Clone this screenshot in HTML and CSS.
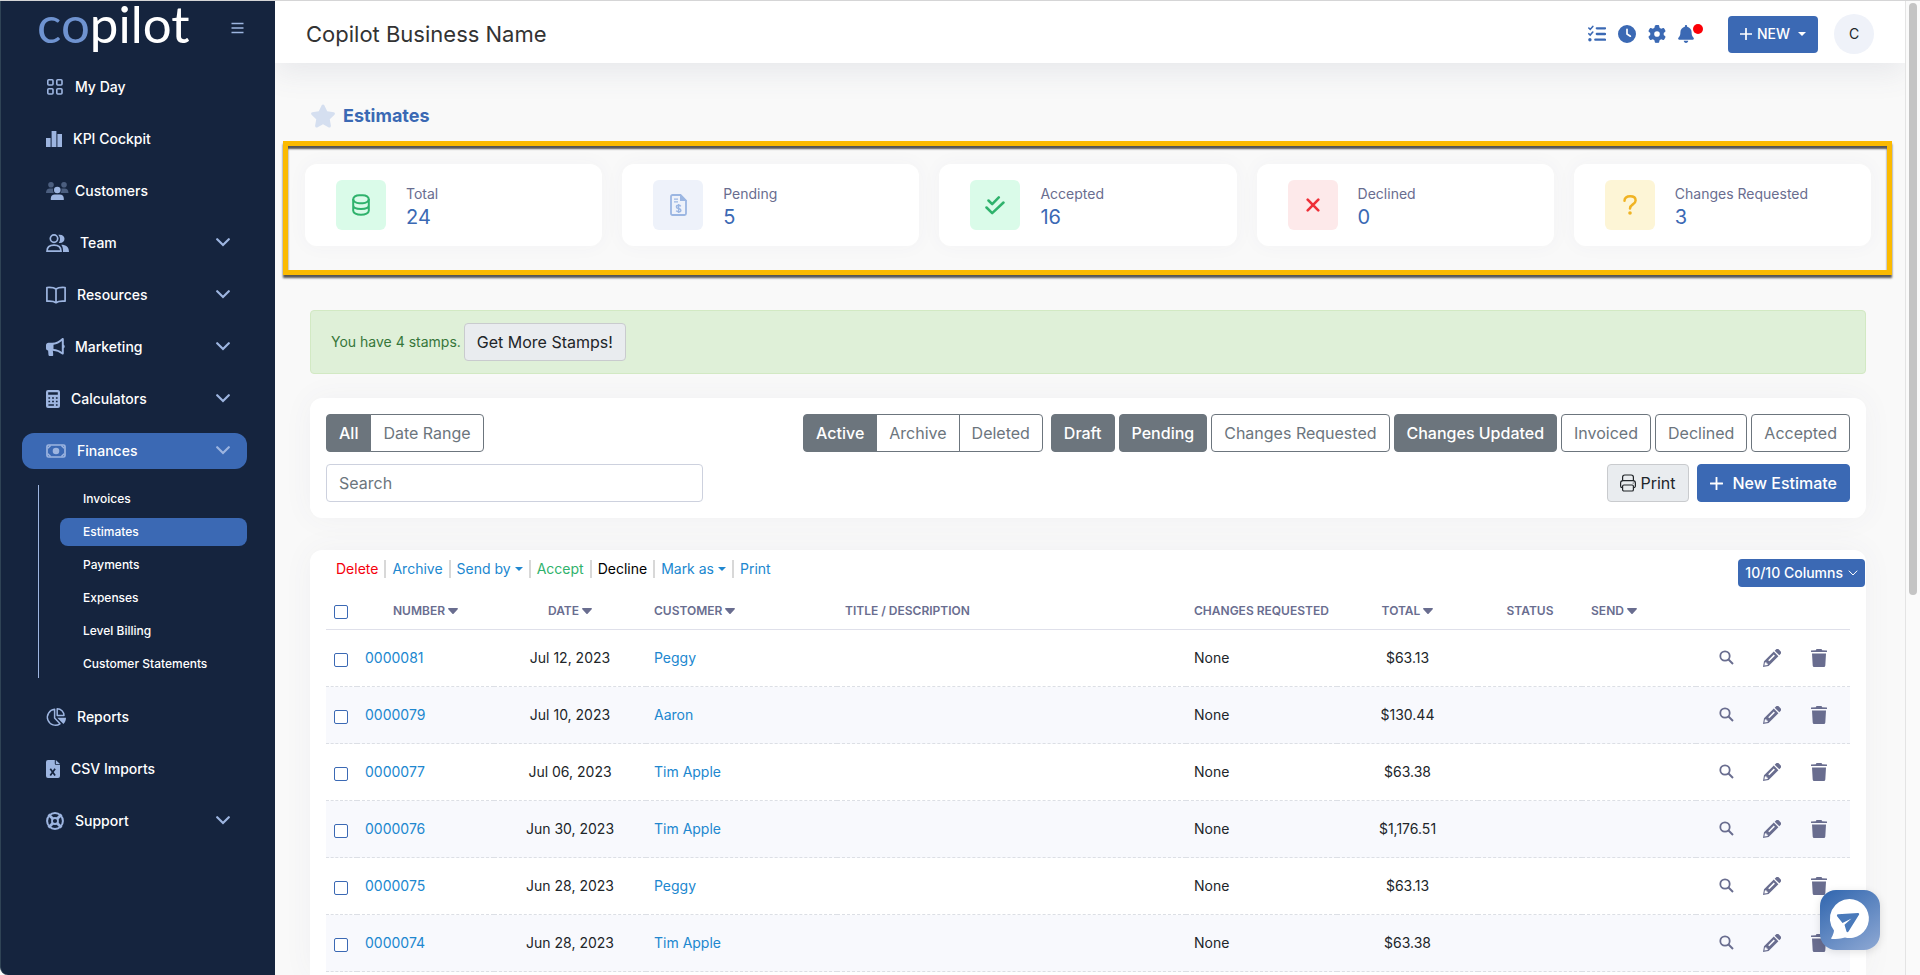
FILE: index.html
```html
<!DOCTYPE html>
<html lang="en">
<head>
<meta charset="utf-8">
<title>Estimates</title>
<link rel="stylesheet" href="styles.css">
</head>
<body>
<svg class="sprite" aria-hidden="true">
  <symbol id="chevron" viewBox="0 0 14 9"><path d="M1.2 1.2 7 7l5.800-5.800" fill="none" stroke="currentColor" stroke-width="2.200" stroke-linecap="round"/></symbol>
  <symbol id="search" viewBox="0 0 15 15"><circle cx="6" cy="6" r="4.700" fill="none" stroke="currentColor" stroke-width="1.800"/><path d="M9.500 9.500 14 14" stroke="currentColor" stroke-width="2"/></symbol>
  <symbol id="pencil" viewBox="0 0 18 18"><path fill="currentColor" fill-rule="evenodd" d="M0 18 1 12.300 10.800 2.600l4.600 4.600L5.600 17zM1.900 13.400l-.5 3.200 3.200-.5.300-1.300-1.300-.2-.2-1.400zM5.200 11.200l1.100 1.100 5.600-5.600-1.100-1.100z"/><path fill="currentColor" d="m11.700 1.700 1-1a2.400 2.400 0 0 1 3.400 0l1.200 1.200a2.400 2.400 0 0 1 0 3.400l-1 1z"/></symbol>
  <symbol id="trash" viewBox="0 0 16 18"><path fill="currentColor" d="M0 1.500 4.800 1.200 5.500 0h5l.700 1.200 4.800.3V3H0zM1 4.400h14l-.7 12a1.600 1.600 0 0 1-1.600 1.600H3.300a1.600 1.600 0 0 1-1.600-1.600z"/></symbol>
  <symbol id="sort" viewBox="0 0 10 6"><path fill="currentColor" d="M.8 0h8.400c.7 0 1 .8.500 1.300L5.600 5.700a.8.800 0 0 1-1.200 0L.3 1.300C-.2.800.1 0 .8 0z"/></symbol>
  <symbol id="caret" viewBox="0 0 8 4"><path fill="currentColor" d="M0 0h8L4 4z"/></symbol>
  <symbol id="plus" viewBox="0 0 12 12"><path d="M6 .5v11M.5 6h11" stroke="currentColor" stroke-width="1.700" stroke-linecap="round"/></symbol>
</svg>
<div class="app">
  <aside class="sidebar">
    <div class="brand">
      <a class="logo" href="#"><span class="logo-co">co</span>pilot</a>
      <button class="menu-toggle" type="button" aria-label="Toggle menu"><svg width="13" height="12" viewBox="0 0 13 12"><path d="M.5 1.500h12M.5 6h12M.5 10.500h12" stroke="currentColor" stroke-width="1.600"/></svg></button>
    </div>
    <nav class="nav">
      <a class="nav-item" href="#"><svg width="18" height="18" viewBox="0 0 18 18"><g fill="none" stroke="currentColor" stroke-width="1.600"><rect x="1.800" y="1.800" width="5.200" height="5.200" rx="1"/><rect x="10.800" y="1.800" width="5.200" height="5.200" rx="1"/><rect x="1.800" y="10.800" width="5.200" height="5.200" rx="1"/><rect x="10.800" y="10.800" width="5.200" height="5.200" rx="1"/></g></svg>My Day</a>
      <a class="nav-item" href="#"><svg width="16" height="18" viewBox="0 0 16 18"><path fill="currentColor" d="M0 8h4.600v9H0zM5.600 1h4.800v16H5.600zM11.400 4H16v13h-4.600z"/></svg>KPI Cockpit</a>
      <a class="nav-item" href="#"><svg width="18" height="18" viewBox="0 0 18 18"><g fill="currentColor"><g opacity=".4"><circle cx="5" cy="2.800" r="2.800"/><circle cx="18" cy="2.800" r="2.800"/><path d="M0 11c0-3 1.600-4.400 4-4.400h3.200C6.700 8.200 7 9.800 8 11zM22.500 11c0-3-1.600-4.400-4-4.400h-3.200c.5 1.600.2 3.200-.8 4.400z"/></g><circle cx="11.300" cy="8" r="3.300"/><path d="M4.800 18v-1.500c0-2.600 1.600-4 4-4h5c2.400 0 4 1.400 4 4V18z"/></g></svg>Customers</a>
      <a class="nav-item" href="#"><svg width="23" height="18" viewBox="0 0 23 18"><g fill="none" stroke="currentColor" stroke-width="1.700"><circle cx="8" cy="4.600" r="3.700"/><path d="M1 17.200c0-4 2.500-6 7-6s7 2 7 6z"/></g><path fill="currentColor" d="M12.300.8c4-.6 6.200 1.300 6.200 4s-2.200 4.700-5.700 4.200c1.800-2.700 1.700-5.600-.5-8.200zM15.200 10.700c5 0 7.800 2.400 7.800 7.300h-6c.2-3-.2-5.200-1.800-7.300z"/></svg>Team<svg class="chev" width="14" height="9"><use href="#chevron"/></svg></a>
      <a class="nav-item" href="#"><svg width="20" height="18" viewBox="0 0 20 18"><path d="M10 3C8 1.500 4.500 1.200.9 1.500v13.700c3.600-.3 7.100 0 9.100 1.500 2-1.500 5.500-1.800 9.100-1.500V1.500C15.500 1.200 12 1.500 10 3zv13.500" fill="none" stroke="currentColor" stroke-width="1.700" stroke-linejoin="round"/></svg>Resources<svg class="chev" width="14" height="9"><use href="#chevron"/></svg></a>
      <a class="nav-item" href="#"><svg width="18" height="18" viewBox="0 0 18 18"><path fill="currentColor" fill-rule="evenodd" d="M16 .3c.9-.5 1.800 0 1.800 1v5.500a2 2 0 0 1 0 3.400v5c0 1.200-1 1.600-1.900 1-2.700-2-5.400-3.200-9.100-3.500.3 1.500.4 3 .4 4.300 0 .6-.4 1-1 1H3.500c-.5 0-.9-.4-1-1l-.4-4.400C.8 12.400 0 11.500 0 10.200V7.300C0 5.800 1 4.800 2.500 4.800h3.600C10 4.800 13.400 3 16 .3zM15.800 3c-2.300 2-5 3.300-8.300 3.700v4.200c3.200.3 6 1.300 8.300 3z"/></svg>Marketing<svg class="chev" width="14" height="9"><use href="#chevron"/></svg></a>
      <a class="nav-item" href="#"><svg width="14" height="18" viewBox="0 0 14 18"><path fill="currentColor" fill-rule="evenodd" d="M2 0h10a2 2 0 0 1 2 2v14a2 2 0 0 1-2 2H2a2 2 0 0 1-2-2V2a2 2 0 0 1 2-2zM2.200 2.200v2.600h9.600V2.200zM2.400 7.200v1.500h1.700V7.200zm3.700 0v1.500h1.800V7.200zm3.800 0v1.500h1.700V7.200zM2.400 10.700v1.500h1.700v-1.500zm3.700 0v1.500h1.800v-1.500zm3.800 0v1.500h1.700v-1.500zM2.400 14.200v1.500h5.500v-1.500zm7.500 0v1.500h1.700v-1.500z"/></svg>Calculators<svg class="chev" width="14" height="9"><use href="#chevron"/></svg></a>
      <a class="nav-item active" href="#"><svg width="20" height="18" viewBox="0 0 20 18"><rect x="1" y="3" width="18" height="12" rx="1.500" fill="none" stroke="currentColor" stroke-width="1.700"/><circle cx="10" cy="9" r="3.300" fill="currentColor"/><path d="M1.800 6.200 4.600 3.500M18.200 6.200l-2.800-2.700M1.800 11.800l2.800 2.700M18.200 11.800l-2.800 2.700" stroke="currentColor" stroke-width="1.500"/></svg>Finances<svg class="chev" width="14" height="9"><use href="#chevron"/></svg></a>
      <div class="subnav">
        <a class="sub-item" href="#">Invoices</a>
        <a class="sub-item active" href="#">Estimates</a>
        <a class="sub-item" href="#">Payments</a>
        <a class="sub-item" href="#">Expenses</a>
        <a class="sub-item" href="#">Level Billing</a>
        <a class="sub-item" href="#">Customer Statements</a>
      </div>
      <a class="nav-item" href="#"><svg width="20" height="18" viewBox="0 0 20 18"><g fill="none" stroke="currentColor" stroke-width="1.500" stroke-linejoin="round"><path d="M8.600 1.300A8 8 0 1 0 14 15.800L8.600 10z"/><path d="M11.200.8v6.800h6.800A6.800 6.800 0 0 0 11.200.8z"/></g><path fill="currentColor" d="M11.300 9.800H20c0 2.600-1 4.800-2.600 6.200z"/></svg>Reports</a>
      <a class="nav-item" href="#"><svg width="14" height="18" viewBox="0 0 14 18"><path fill="currentColor" d="M2 0h6.800v3.500c0 .8.500 1.300 1.200 1.300h4V16a2 2 0 0 1-2 2H2a2 2 0 0 1-2-2V2a2 2 0 0 1 2-2zM9.800 0 14 4h-4.200z"/><path d="m4.300 8.800 4.800 6.700M9.100 8.800l-4.800 6.700" stroke="#15243e" stroke-width="1.700"/></svg>CSV Imports</a>
      <a class="nav-item" href="#"><svg width="18" height="18" viewBox="0 0 18 18"><g fill="none" stroke="currentColor"><circle cx="9" cy="9" r="7.900" stroke-width="2"/><circle cx="9" cy="9" r="3" stroke-width="1.800"/><path d="m2.500 2.500 4.300 4.300M15.500 2.500l-4.300 4.300M2.500 15.500l4.300-4.300M15.500 15.500l-4.300-4.300" stroke-width="2.800"/></g></svg>Support<svg class="chev" width="14" height="9"><use href="#chevron"/></svg></a>
    </nav>
  </aside>

  <div class="page">
    <header class="topbar">
      <div class="business">Copilot Business Name</div>
      <div class="tools">
        <button class="tool" type="button" aria-label="Tasks"><svg width="18" height="18" viewBox="0 0 18 18"><path d="M8.800 3.300h8.200M8.800 9h8.200M7.300 14.700H17" stroke="currentColor" stroke-width="2.300" stroke-linecap="round"/><path d="m.8 3 1.400 1.400 2.600-3M.8 8.700l1.400 1.400 2.600-3" fill="none" stroke="currentColor" stroke-width="1.600" stroke-linecap="round"/><circle cx="1.900" cy="14.700" r="1.700" fill="currentColor"/></svg></button>
        <button class="tool" type="button" aria-label="Clock"><svg width="18" height="18" viewBox="0 0 512 512"><path fill="currentColor" fill-rule="evenodd" d="M256 0a256 256 0 1 1 0 512A256 256 0 1 1 256 0zM232 120V256c0 8 4 15.500 10.700 20l96 64c11 7.400 25.900 4.400 33.300-6.700s4.400-25.900-6.700-33.300L280 243.200V120c0-13.300-10.700-24-24-24s-24 10.700-24 24z"/></svg></button>
        <button class="tool" type="button" aria-label="Settings"><svg width="18" height="18" viewBox="0 0 512 512"><path fill="currentColor" fill-rule="evenodd" d="M495.900 166.600c3.200 8.700 .5 18.400-6.400 24.600l-43.300 39.400c1.100 8.300 1.700 16.800 1.700 25.400s-.6 17.100-1.700 25.400l43.300 39.400c6.900 6.200 9.600 15.900 6.400 24.600c-4.400 11.900-9.700 23.300-15.800 34.300l-4.700 8.100c-6.600 11-14 21.400-22.100 31.200c-5.900 7.200-15.700 9.600-24.500 6.800l-55.700-17.700c-13.400 10.300-28.200 18.900-44 25.400l-12.500 57.100c-2 9.100-9 16.300-18.200 17.800c-13.800 2.300-28 3.500-42.500 3.500s-28.700-1.200-42.500-3.500c-9.200-1.500-16.200-8.700-18.200-17.800l-12.500-57.100c-15.800-6.500-30.600-15.100-44-25.400L83.100 425.900c-8.800 2.800-18.600 .3-24.500-6.800c-8.100-9.800-15.500-20.200-22.100-31.200l-4.700-8.100c-6.100-11-11.400-22.400-15.800-34.300c-3.200-8.700-.5-18.400 6.400-24.600l43.300-39.400C64.600 273.100 64 264.600 64 256s.6-17.100 1.700-25.400L22.400 191.200c-6.900-6.200-9.600-15.900-6.400-24.600c4.400-11.900 9.700-23.300 15.800-34.300l4.700-8.100c6.600-11 14-21.400 22.100-31.200c5.900-7.200 15.700-9.600 24.500-6.800l55.700 17.700c13.400-10.300 28.200-18.900 44-25.400l12.500-57.100c2-9.100 9-16.300 18.200-17.800C227.300 1.200 241.500 0 256 0s28.700 1.200 42.500 3.500c9.200 1.500 16.200 8.700 18.200 17.800l12.500 57.100c15.800 6.500 30.600 15.100 44 25.400l55.700-17.700c8.800-2.800 18.600-.3 24.500 6.800c8.100 9.800 15.500 20.200 22.100 31.200l4.700 8.100c6.100 11 11.400 22.400 15.800 34.300zM256 336a80 80 0 1 0 0-160 80 80 0 1 0 0 160z"/></svg></button>
        <button class="tool bell" type="button" aria-label="Notifications"><svg width="16" height="18" viewBox="0 0 448 512"><path fill="currentColor" d="M224 0c-17.700 0-32 14.300-32 32V51.200C119 66 64 130.600 64 208v18.800c0 47-17.300 92.400-48.500 127.600l-7.400 8.300c-8.400 9.400-10.400 22.900-5.300 34.400S19.400 416 32 416H416c12.600 0 24-7.400 29.200-18.900s3.100-25-5.300-34.400l-7.400-8.300C401.300 319.200 384 273.900 384 226.800V208c0-77.400-55-142-128-156.800V32c0-17.700-14.300-32-32-32zm45.300 493.300c12-12 18.700-28.300 18.700-45.300H224 160c0 17 6.700 33.300 18.700 45.300s28.300 18.700 45.300 18.700s33.300-6.700 45.300-18.700z"/></svg><span class="dot"></span></button>
        <button class="new-btn" type="button"><svg width="12" height="12"><use href="#plus"/></svg>NEW<svg class="new-caret" width="8" height="4"><use href="#caret"/></svg></button>
        <button class="avatar" type="button">C</button>
      </div>
    </header>

    <main class="content">
      <h1 class="heading"><svg width="26" height="24" viewBox="0 0 576 512"><path fill="#d5dff0" d="M316.900 18C311.600 7 300.400 0 288.100 0s-23.400 7-28.800 18L195 150.300 51.400 171.500c-12 1.800-22 10.200-25.700 21.700s-.7 24.200 7.900 32.700L137.800 329 113.200 474.700c-2 12 3 24.200 12.900 31.300s23 8 33.800 2.300l128.300-68.500 128.300 68.500c10.800 5.700 23.900 4.900 33.800-2.300s14.900-19.300 12.900-31.300L438.500 329 542.700 225.900c8.600-8.500 11.700-21.200 7.900-32.700s-13.700-19.900-25.700-21.700L381.200 150.300 316.900 18z"/></svg>Estimates</h1>

      <section class="stats">
        <div class="stat"><span class="stat-icon green"><svg width="18" height="22" viewBox="0 0 18 22"><g fill="none" stroke="currentColor" stroke-width="2"><rect x="1.200" y="1.200" width="15.600" height="8" rx="6" ry="4"/><path d="M1.200 5v11.800c0 2.300 3.400 4 7.800 4s7.800-1.700 7.800-4V5M1.200 11.300c0 2.200 3.400 3.700 7.800 3.700s7.800-1.500 7.800-3.700"/></g></svg></span><div class="stat-text"><div class="stat-label">Total</div><div class="stat-value">24</div></div></div>
        <div class="stat"><span class="stat-icon blue"><svg width="17" height="22" viewBox="0 0 17 22"><path d="M2.500 1h8L16 6.500v13a1.500 1.500 0 0 1-1.500 1.500h-12A1.500 1.500 0 0 1 1 19.500v-17A1.500 1.500 0 0 1 2.500 1z" fill="none" stroke="currentColor" stroke-width="1.800"/><path fill="currentColor" d="M10 0v7h7zM4 4.500h4v1.300H4zM4 7.300h4v1.300H4z"/><path d="M10.800 12.300c-.5-.7-1.200-1-2.200-1-1.300 0-2.200.6-2.200 1.600 0 2.200 4.500 1.100 4.500 3.300 0 1-.9 1.600-2.300 1.600-1.100 0-1.900-.4-2.400-1.100M8.600 10v9" fill="none" stroke="currentColor" stroke-width="1.400"/></svg></span><div class="stat-text"><div class="stat-label">Pending</div><div class="stat-value">5</div></div></div>
        <div class="stat"><span class="stat-icon green"><svg width="20" height="20" viewBox="0 0 20 20"><path d="m3.500 5.500 3.700 3.700 6.600-6.800M1.500 12.500l5.700 5.700L18.500 7.500" fill="none" stroke="currentColor" stroke-width="2.500" stroke-linecap="round" stroke-linejoin="round"/></svg></span><div class="stat-text"><div class="stat-label">Accepted</div><div class="stat-value">16</div></div></div>
        <div class="stat"><span class="stat-icon red"><svg width="14" height="14" viewBox="0 0 14 14"><path d="m1.700 1.700 10.600 10.600M12.300 1.700 1.700 12.300" stroke="currentColor" stroke-width="2.600" stroke-linecap="round"/></svg></span><div class="stat-text"><div class="stat-label">Declined</div><div class="stat-value">0</div></div></div>
        <div class="stat"><span class="stat-icon yellow"><svg width="14" height="20" viewBox="0 0 14 20"><path d="M1.500 5.800C1.500 3 3.600 1.300 7.200 1.300c3.400 0 5.400 1.700 5.400 4.100 0 4.100-5.600 3.800-5.600 8" fill="none" stroke="currentColor" stroke-width="2.500" stroke-linecap="round"/><circle cx="7" cy="18" r="1.800" fill="currentColor"/></svg></span><div class="stat-text"><div class="stat-label">Changes Requested</div><div class="stat-value">3</div></div></div>
      </section>

      <div class="alert"><span>You have 4 stamps.</span><button class="btn light" type="button">Get More Stamps!</button></div>

      <section class="card filters">
        <div class="filter-row">
          <div class="group"><button class="btn on" type="button">All</button><button class="btn outline" type="button">Date Range</button></div>
          <div class="statuses">
            <div class="group"><button class="btn on" type="button">Active</button><button class="btn outline" type="button">Archive</button><button class="btn outline" type="button">Deleted</button></div>
            <div class="toggles">
              <button class="btn on" type="button">Draft</button>
              <button class="btn on" type="button">Pending</button>
              <button class="btn outline" type="button">Changes Requested</button>
              <button class="btn on" type="button">Changes Updated</button>
              <button class="btn outline" type="button">Invoiced</button>
              <button class="btn outline" type="button">Declined</button>
              <button class="btn outline" type="button">Accepted</button>
            </div>
          </div>
        </div>
        <div class="filter-row">
          <input class="search" type="text" placeholder="Search" aria-label="Search">
          <div class="actions">
            <button class="btn light" type="button"><svg class="print-icon" width="16" height="18" viewBox="0 0 16 18"><g fill="none" stroke="currentColor" stroke-width="1.200"><path d="M2.600 6.700V3.200A2.200 2.200 0 0 1 4.800 1h6.400a2.200 2.200 0 0 1 2.200 2.200v3.500M2.600 13.600H2.200A1.600 1.600 0 0 1 .6 12V9.200a2.500 2.500 0 0 1 2.500-2.500h9.800a2.500 2.500 0 0 1 2.500 2.500V12a1.600 1.600 0 0 1-1.600 1.600h-.4"/><rect x="2.600" y="11" width="10.800" height="6" rx="1.300"/></g><circle cx="13.200" cy="9" r=".6" fill="currentColor"/></svg>Print</button>
            <button class="btn primary" type="button"><svg class="plus-icon" width="13" height="13"><use href="#plus"/></svg>New Estimate</button>
          </div>
        </div>
      </section>

      <section class="card list">
        <div class="list-top">
          <div class="bulk">
            <a class="danger" href="#">Delete</a><a href="#">Archive</a><a href="#">Send by<svg width="8" height="4"><use href="#caret"/></svg></a><a class="success" href="#">Accept</a><a class="dark" href="#">Decline</a><a href="#">Mark as<svg width="8" height="4"><use href="#caret"/></svg></a><a href="#">Print</a>
          </div>
          <button class="columns-btn" type="button">10/10 Columns<svg width="10" height="6" viewBox="0 0 10 6"><path d="m.8.700 4.200 4.300L9.200.7" fill="none" stroke="currentColor"/></svg></button>
        </div>
        <table class="table">
          <colgroup><col class="c-check"><col class="c-number"><col class="c-date"><col class="c-customer"><col><col class="c-changes"><col class="c-total"><col class="c-status"><col class="c-send"><col class="c-view"><col class="c-edit"><col class="c-del"></colgroup>
          <thead><tr>
            <th><input type="checkbox" aria-label="Select all"></th>
            <th class="mid">NUMBER<svg width="10" height="6"><use href="#sort"/></svg></th>
            <th class="mid">DATE<svg width="10" height="6"><use href="#sort"/></svg></th>
            <th>CUSTOMER<svg width="10" height="6"><use href="#sort"/></svg></th>
            <th>TITLE / DESCRIPTION</th>
            <th>CHANGES REQUESTED</th>
            <th class="mid">TOTAL<svg width="10" height="6"><use href="#sort"/></svg></th>
            <th class="mid">STATUS</th>
            <th class="mid">SEND<svg width="10" height="6"><use href="#sort"/></svg></th>
            <th></th><th></th><th></th>
          </tr></thead>
          <tbody>
            <tr><td><input type="checkbox" aria-label="Select 0000081"></td><td><a href="#">0000081</a></td><td class="mid">Jul 12, 2023</td><td><a href="#">Peggy</a></td><td></td><td>None</td><td class="mid">$63.13</td><td></td><td></td><td class="act"><button type="button" aria-label="View"><svg width="15" height="15"><use href="#search"/></svg></button></td><td class="act"><button type="button" aria-label="Edit"><svg width="18" height="18"><use href="#pencil"/></svg></button></td><td class="act"><button type="button" aria-label="Delete"><svg width="16" height="18"><use href="#trash"/></svg></button></td></tr>
            <tr><td><input type="checkbox" aria-label="Select 0000079"></td><td><a href="#">0000079</a></td><td class="mid">Jul 10, 2023</td><td><a href="#">Aaron</a></td><td></td><td>None</td><td class="mid">$130.44</td><td></td><td></td><td class="act"><button type="button" aria-label="View"><svg width="15" height="15"><use href="#search"/></svg></button></td><td class="act"><button type="button" aria-label="Edit"><svg width="18" height="18"><use href="#pencil"/></svg></button></td><td class="act"><button type="button" aria-label="Delete"><svg width="16" height="18"><use href="#trash"/></svg></button></td></tr>
            <tr><td><input type="checkbox" aria-label="Select 0000077"></td><td><a href="#">0000077</a></td><td class="mid">Jul 06, 2023</td><td><a href="#">Tim Apple</a></td><td></td><td>None</td><td class="mid">$63.38</td><td></td><td></td><td class="act"><button type="button" aria-label="View"><svg width="15" height="15"><use href="#search"/></svg></button></td><td class="act"><button type="button" aria-label="Edit"><svg width="18" height="18"><use href="#pencil"/></svg></button></td><td class="act"><button type="button" aria-label="Delete"><svg width="16" height="18"><use href="#trash"/></svg></button></td></tr>
            <tr><td><input type="checkbox" aria-label="Select 0000076"></td><td><a href="#">0000076</a></td><td class="mid">Jun 30, 2023</td><td><a href="#">Tim Apple</a></td><td></td><td>None</td><td class="mid">$1,176.51</td><td></td><td></td><td class="act"><button type="button" aria-label="View"><svg width="15" height="15"><use href="#search"/></svg></button></td><td class="act"><button type="button" aria-label="Edit"><svg width="18" height="18"><use href="#pencil"/></svg></button></td><td class="act"><button type="button" aria-label="Delete"><svg width="16" height="18"><use href="#trash"/></svg></button></td></tr>
            <tr><td><input type="checkbox" aria-label="Select 0000075"></td><td><a href="#">0000075</a></td><td class="mid">Jun 28, 2023</td><td><a href="#">Peggy</a></td><td></td><td>None</td><td class="mid">$63.13</td><td></td><td></td><td class="act"><button type="button" aria-label="View"><svg width="15" height="15"><use href="#search"/></svg></button></td><td class="act"><button type="button" aria-label="Edit"><svg width="18" height="18"><use href="#pencil"/></svg></button></td><td class="act"><button type="button" aria-label="Delete"><svg width="16" height="18"><use href="#trash"/></svg></button></td></tr>
            <tr><td><input type="checkbox" aria-label="Select 0000074"></td><td><a href="#">0000074</a></td><td class="mid">Jun 28, 2023</td><td><a href="#">Tim Apple</a></td><td></td><td>None</td><td class="mid">$63.38</td><td></td><td></td><td class="act"><button type="button" aria-label="View"><svg width="15" height="15"><use href="#search"/></svg></button></td><td class="act"><button type="button" aria-label="Edit"><svg width="18" height="18"><use href="#pencil"/></svg></button></td><td class="act"><button type="button" aria-label="Delete"><svg width="16" height="18"><use href="#trash"/></svg></button></td></tr>
          </tbody>
        </table>
      </section>
    </main>
  </div>
  <div class="scrollbar"><div class="thumb"></div></div>
</div>
<button class="chat" type="button" aria-label="Chat"><svg width="60" height="60" viewBox="0 0 60 60"><path fill="#fff" d="M29.500 9a19.500 19.500 0 1 1-4.500 38.500c-4 1.300-8.500 1.500-13 1.500-.8 0-1-.7-.6-1.300 1.500-2.300 2.400-5 2.600-7.200A19.500 19.500 0 0 1 29.500 9z"/><path fill="#4a7abb" d="M18 24.300 38 23c1 0 1.500.9 1 1.800L28.500 41.500c-.6 1-1.800.8-2.100-.3l-1.900-6.500 7-6.200-9 4.400-5.200-6.500c-.7-.9-.4-2 .7-2.100z"/></svg></button>
</body>
</html>
```
FILE: styles.css
```css
* { box-sizing: border-box; }
body {
  margin: 0;
  font-family: Inter, "Liberation Sans", sans-serif;
  font-size: 14px;
  line-height: 20px;
  color: #212529;
  background: #f9f9f9;
}
a { color: #2087cf; text-decoration: none; }
button, input { font: inherit; color: inherit; margin: 0; }
button { cursor: pointer; border: 0; background: none; padding: 0; }
svg { flex: none; }
.sprite { display: none; }
.app { display: flex; height: 100vh; overflow: hidden; border-top: 1px solid #d5d5d6; }

/* Sidebar */
.sidebar {
  flex: 0 0 275px;
  margin-top: -1px;
  background: #15243e;
  border-left: 1px solid #2f4355;
  border-top: 1px solid #02060f;
  border-bottom-left-radius: 8px;
}
.brand { display: flex; align-items: flex-start; justify-content: space-between; height: 52px; padding: 0 31px 0 36px; }
.logo { font-family: Lato, sans-serif; font-size: 51px; line-height: 46px; color: #fff; }
.logo-co { color: #6f93d0; }
.menu-toggle { display: flex; padding-top: 21px; color: #9db5e0; }
.nav { display: flex; flex-direction: column; gap: 16px; padding: 16px 28px 0 21px; }
.nav-item {
  display: flex;
  align-items: center;
  gap: 11px;
  height: 36px;
  padding: 0 17px 0 24px;
  border-radius: 12px;
  color: #fff;
  font-weight: 500;
}
.nav-item svg { color: #9db5e0; overflow: visible; }
.nav-item .chev { margin-left: auto; margin-bottom: 2px; }
.nav-item.active, .sub-item.active { background: #3b69b4; }
.subnav {
  display: flex;
  flex-direction: column;
  gap: 5px;
  margin: 0 0 5px 16px;
  border-left: 1px solid #9db5e0;
  padding-left: 21px;
}
.sub-item { height: 28px; padding-left: 23px; border-radius: 8px; font-size: 12px; line-height: 28px; font-weight: 500; color: #fff; }

/* Top bar */
.page { flex: 1; min-width: 0; display: flex; flex-direction: column; overflow: hidden; }
.topbar {
  display: flex;
  flex: none;
  align-items: center;
  justify-content: space-between;
  height: 62px;
  padding: 4px 31px 0 31px;
  background: #fff;
  box-shadow: 0 10px 30px rgba(82, 88, 120, .1);
}
.business { font-size: 22px; line-height: 28px; color: #333; }
.tools { display: flex; align-items: center; gap: 12px; color: #3b69b4; }
.tool { position: relative; display: flex; }
.dot { position: absolute; left: 15px; top: -1px; width: 10px; height: 10px; border-radius: 50%; background: #fb0007; }
.new-btn {
  display: flex;
  align-items: center;
  gap: 5px;
  height: 37px;
  margin-left: 22px;
  padding: 0 12px;
  border-radius: 4px;
  background: #3b69b4;
  color: #fff;
  font-weight: 500;
}
.new-caret { margin-left: 3px; }
.avatar { width: 40px; height: 40px; margin-left: 4px; border-radius: 50%; background: #eff2f9; color: #212529; }

/* Content */
.content { flex: 1; display: flex; flex-direction: column; padding: 39px 13px 0 8px; }
.heading { display: flex; align-items: center; gap: 7px; margin: 0 0 11px 27px; font-size: 18px; line-height: 28px; font-weight: 700; color: #3b69b4; }
.stats {
  display: grid;
  grid-template-columns: repeat(5, 1fr);
  gap: 20px;
  padding: 18px 16px 24px 17px;
  border: 5px solid #fbba00;
  box-shadow: 0 3px 2px #555, inset 0 3px 2px #555;
}
.stat {
  display: flex;
  align-items: center;
  gap: 20px;
  padding: 16px 31px;
  border-radius: 12px;
  background: #fff;
  box-shadow: 0 0 20px rgba(76, 87, 125, .04);
}
.stat-icon { display: flex; align-items: center; justify-content: center; width: 50px; height: 50px; border-radius: 6px; }
.green { background: #dafbe9; color: #2fb26c; }
.blue { background: #eef2fa; color: #9bb6e2; }
.red { background: #fde9ea; color: #ee2f38; }
.yellow { background: #fdf5d6; color: #f0b323; }
.stat-text { padding-top: 2px; }
.stat-label { line-height: 22px; color: #696d8f; }
.stat-value { font-size: 20px; line-height: 24px; color: #3b69b4; }

.alert {
  display: flex;
  align-items: center;
  gap: 3px;
  margin: 35px 26px 24px 27px;
  padding: 12px 20px;
  border: 1px solid #d2e9c3;
  border-radius: 4px;
  background: #dff0d8;
  color: #36763a;
}
.btn { display: inline-flex; align-items: center; height: 38px; padding: 0 12px; border: 1px solid #6c757d; border-radius: 4px; font-size: 16px; line-height: 24px; white-space: nowrap; }
.btn.light { background: #e9ecef; border-color: #c9cbce; color: #212529; }
.btn.on { background: #6c757d; color: #fff; font-weight: 500; }
.btn.outline { background: #fff; color: #6c757d; }
.btn.primary { background: #3b69b4; border-color: #3b69b4; color: #fff; font-weight: 500; }
.print-icon { margin-right: 4px; }
.plus-icon { margin-right: 10px; }
.group { display: flex; }
.group .btn + .btn { margin-left: -1px; }
.group .btn:not(:first-child) { border-top-left-radius: 0; border-bottom-left-radius: 0; }
.group .btn:not(:last-child) { border-top-right-radius: 0; border-bottom-right-radius: 0; }

.card { margin: 0 26px 0 27px; border-radius: 12px; background: #fff; box-shadow: 0 0 30px rgba(76, 87, 125, .05); }
.filters { display: flex; flex-direction: column; gap: 12px; padding: 16px; margin-bottom: 32px; }
.filter-row, .statuses, .actions, .toggles { display: flex; }
.filter-row { justify-content: space-between; }
.statuses, .actions { gap: 8px; }
.toggles { gap: 4px; }
.search { width: 377px; height: 38px; padding: 0 12px; border: 1px solid #cdd1de; border-radius: 4px; font-size: 16px; background: #fff; }
.search::placeholder { color: #6c757d; opacity: 1; }

.list { flex: 1 0 auto; border-bottom-left-radius: 0; border-bottom-right-radius: 0; padding: 9px 16px 0; }
.list-top { display: flex; justify-content: space-between; align-items: flex-start; margin-right: -15px; }
.bulk { display: flex; padding: 1px 0 0 10px; line-height: 18px; }
.bulk a { display: flex; align-items: center; gap: 4px; }
.bulk a + a { margin-left: 6px; padding-left: 6px; border-left: 2px solid #d8d8d8; }
.bulk .danger { color: #f5000c; }
.bulk .success { color: #2fb26c; }
.bulk .dark { color: #000; }
.columns-btn { display: flex; align-items: center; gap: 5px; height: 28px; padding: 0 7px; border-radius: 4px; background: #3b69b4; color: #fff; font-weight: 500; }

.table { width: 100%; table-layout: fixed; border-collapse: separate; border-spacing: 0; }
.c-check { width: 31px; }
.c-number { width: 137px; }
.c-date { width: 152px; }
.c-customer { width: 191px; }
.c-changes { width: 151px; }
.c-total { width: 141px; }
.c-status { width: 104px; }
.c-send { width: 114px; }
.c-view { width: 60px; }
.c-edit { width: 32px; }
.c-del { width: 62px; }
th, td { padding: 0 8px; text-align: left; vertical-align: middle; white-space: nowrap; }
th { height: 43px; padding-top: 5px; border-bottom: 1px solid #dfe0ea; font-size: 12px; font-weight: 600; color: #696d8f; }
th svg { margin-left: 3px; vertical-align: 1px; }
td { height: 57px; border-bottom: 1px dashed #dcdfe5; }
.mid { text-align: center; }
th:nth-child(9) { padding-right: 58px; }
tbody tr:nth-child(even) { background: #f8f9fd; }
input[type="checkbox"] { display: block; appearance: none; width: 14px; height: 14px; margin-top: 3px; border: 1px solid #3b69b4; border-radius: 2px; background: #fff; }
.act { padding: 0 0 3px; text-align: center; color: #696d8f; }
.act button { display: inline-flex; vertical-align: middle; }

/* Scroll bar and chat launcher */
.scrollbar { flex: 0 0 15px; padding: 2px 3px; background: #fafafa; border-left: 1px solid #e4e4e4; }
.thumb { height: 61%; border-radius: 4px; background: #c4c4c4; }
.chat { position: fixed; right: 40px; bottom: 25px; width: 60px; height: 60px; border-radius: 16px; overflow: hidden; background: linear-gradient(145deg, #2f65ae, #8fa9d4); box-shadow: 0 2px 8px rgba(0, 0, 0, .12); }
```
